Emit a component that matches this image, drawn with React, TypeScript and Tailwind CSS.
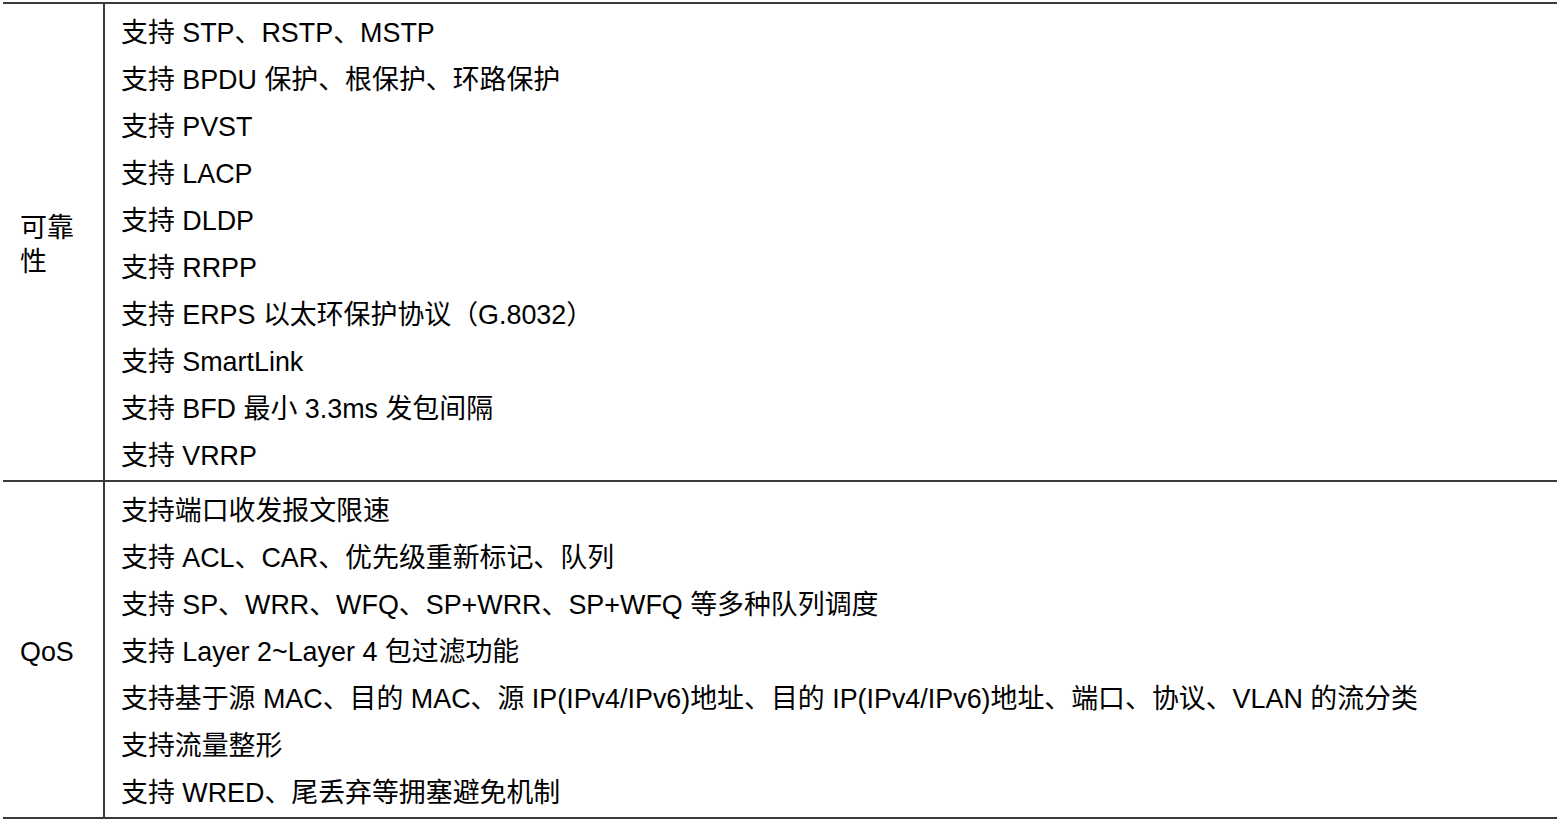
import React from "react";

const rows: { label: string; items: string[] }[] = [
  {
    label: "可靠性",
    items: [
      "支持 STP、RSTP、MSTP",
      "支持 BPDU 保护、根保护、环路保护",
      "支持 PVST",
      "支持 LACP",
      "支持 DLDP",
      "支持 RRPP",
      "支持 ERPS 以太环保护协议（G.8032）",
      "支持 SmartLink",
      "支持 BFD 最小 3.3ms 发包间隔",
      "支持 VRRP",
    ],
  },
  {
    label: "QoS",
    items: [
      "支持端口收发报文限速",
      "支持 ACL、CAR、优先级重新标记、队列",
      "支持 SP、WRR、WFQ、SP+WRR、SP+WFQ 等多种队列调度",
      "支持 Layer 2~Layer 4 包过滤功能",
      "支持基于源 MAC、目的 MAC、源 IP(IPv4/IPv6)地址、目的 IP(IPv4/IPv6)地址、端口、协议、VLAN 的流分类",
      "支持流量整形",
      "支持 WRED、尾丢弃等拥塞避免机制",
    ],
  },
];

export default function App() {
  return (
    <div
      className="w-[1557px] h-[821px] overflow-hidden bg-white pt-[2px] pl-[3px] text-black"
      style={{ fontFamily: '"Liberation Sans", "Noto Sans CJK SC", sans-serif' }}
    >
      <div className="w-[1560px] border-t-2 border-b-2 border-[#3a3a3a]">
        {rows.map((row, i) => (
          <div
            key={row.label}
            className={
              i > 0
                ? "grid grid-cols-[102px_1fr] border-t-2 border-[#3a3a3a]"
                : "grid grid-cols-[102px_1fr]"
            }
          >
            <div className="flex items-center border-r-2 border-[#3a3a3a] pl-[17px] pr-[14px] pt-[5px] text-[26.9px] leading-[34px]">
              <span>{row.label}</span>
            </div>
            <div className="pl-[16px] pt-[6px] text-[26.9px] leading-[47px] whitespace-nowrap">
              {row.items.map((t) => (
                <div key={t}>{t}</div>
              ))}
            </div>
          </div>
        ))}
      </div>
    </div>
  );
}
